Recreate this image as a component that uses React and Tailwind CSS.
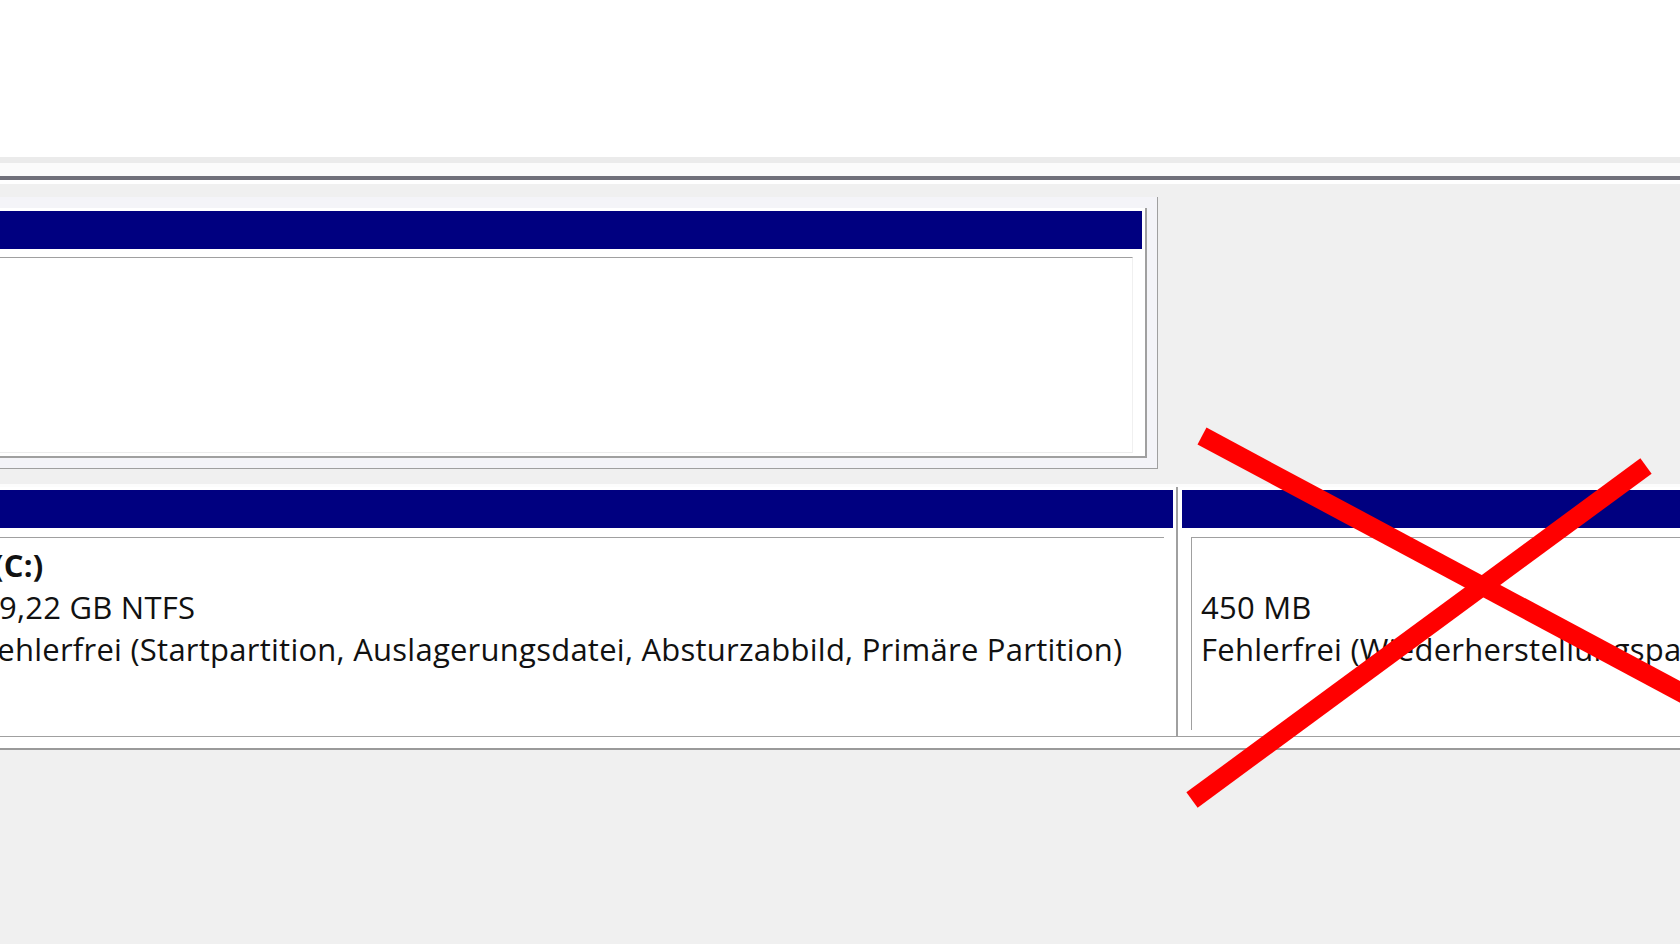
import React from 'react';

// Partition block of the disk row: navy header, white body with an inset frame
function Partition({ lines, className, bodyClass }) {
  return (
    <div className={"bg-white pt-[3px] " + className}>
      <div className="h-[38px] bg-[#000080]" />
      <div className={"mt-[9px] h-[193px] border-t border-l border-[#a0a0a0] pt-[6px] overflow-hidden " + bodyClass}>
        {lines.map((l, i) => (
          <div key={i} className={"leading-[42px] text-[31px] tracking-[0.25px] whitespace-nowrap text-[#111] " + (l.bold ? 'font-bold ' : '') + (l.cls || '')}>
            {l.text || '\u00a0'}
          </div>
        ))}
      </div>
    </div>
  );
}

export default function App() {
  return (
    <div className="relative w-[1680px] h-[944px] overflow-hidden bg-[#f0f0f0] font-['Open_Sans',sans-serif]">
      {/* top white area + splitter */}
      <div className="h-[157px] bg-white" />
      <div className="h-[6px] bg-[#ebebeb]" />
      <div className="h-[13px] bg-[#fbfbfb]" />
      <div className="h-[4px] bg-[#70707a]" />
      <div className="h-[4px] bg-white" />

      <div className="pt-[13px]">
        {/* disk row 1 */}
        <div className="ml-[-20px] w-[1178px] h-[272px] border-r border-b border-[#a0a0a0] bg-[#f4f4f8] pt-[11px] pr-[10px]">
          <div className="h-[250px] bg-white border-r-2 border-b-2 border-[#a0a0a0] pt-[3px] pr-[3px]">
            <div className="h-[38px] bg-[#000080]" />
            <div className="mt-[8px] mr-[9px] h-[196px] border-t border-l border-[#a0a0a0] border-r border-b border-r-[#f0f0f0] border-b-[#ececec]" />
          </div>
        </div>

        {/* disk row 2 */}
        <div className="mt-[15px] flex border-t-[3px] border-t-[#fcfcfc] border-b border-b-[#a0a0a0] h-[253px]">
          <Partition
            className="ml-[-29px] w-[1207px] shrink-0 pl-[3px] pr-[3px] border-r-2 border-[#a0a0a0]"
            bodyClass="mr-[9px] pl-[6px]"
            lines={[
              { text: '(C:)', bold: true, cls: 'ml-[12px]' },
              { text: '59,22 GB NTFS' },
              { text: 'Fehlerfrei (Startpartition, Auslagerungsdatei, Absturzabbild, Primäre Partition)' },
            ]}
          />
          <Partition
            className="flex-1 pl-[4px]"
            bodyClass="ml-[9px] pl-[9px]"
            lines={[
              { text: '' },
              { text: '450 MB' },
              { text: 'Fehlerfrei (Wiederherstellungspartition)' },
            ]}
          />
        </div>
        <div className="h-[11px] bg-white" />
        <div className="h-[2px] bg-[#9a9a9a]" />
      </div>

      {/* red cross over the recovery partition */}
      <svg className="absolute inset-0 pointer-events-none" width="1680" height="944">
        <line x1="1202" y1="436" x2="1740" y2="724" stroke="#ff0000" strokeWidth="19" />
        <line x1="1192" y1="800" x2="1646" y2="466" stroke="#ff0000" strokeWidth="19" />
      </svg>
    </div>
  );
}
